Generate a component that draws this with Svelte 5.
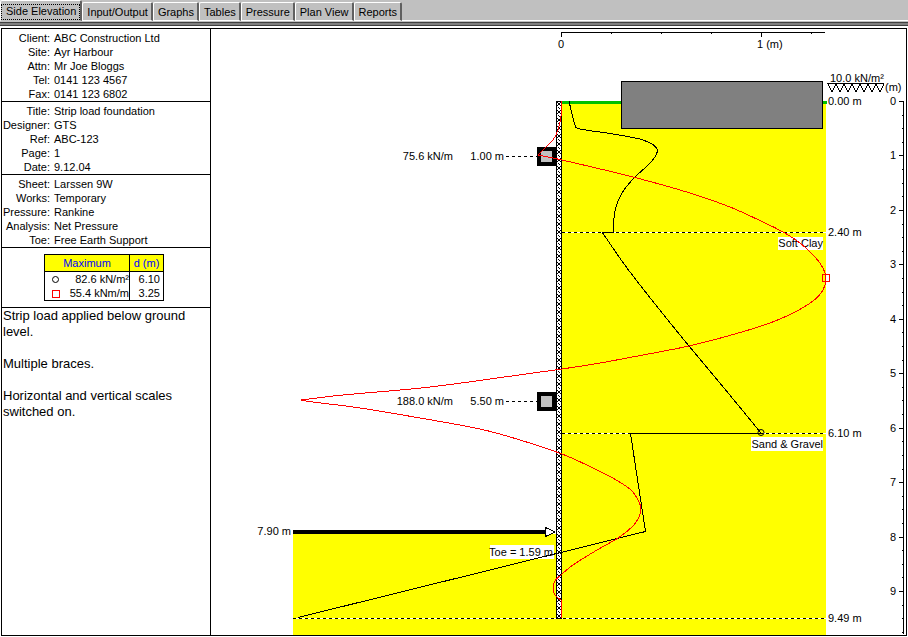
<script>
  let tabs = ["Side Elevation", "Input/Output", "Graphs", "Tables", "Pressure", "Plan View", "Reports"];
  let active = 0;

  const details = [
    [
      ["Client:", "ABC Construction Ltd"],
      ["Site:", "Ayr Harbour"],
      ["Attn:", "Mr Joe Bloggs"],
      ["Tel:", "0141 123 4567"],
      ["Fax:", "0141 123 6802"]
    ],
    [
      ["Title:", "Strip load foundation"],
      ["Designer:", "GTS"],
      ["Ref:", "ABC-123"],
      ["Page:", "1"],
      ["Date:", "9.12.04"]
    ],
    [
      ["Sheet:", "Larssen 9W"],
      ["Works:", "Temporary"],
      ["Pressure:", "Rankine"],
      ["Analysis:", "Net Pressure"],
      ["Toe:", "Free Earth Support"]
    ]
  ];

  // drawing scales: y for a depth in metres, x for a distance from the wall
  const depthY = d => Math.round(101 + d * 54.45);
  const distX = d => 561 + d * 200;

  const depthTicks = Array.from({ length: 40 }, (_, i) => i / 4).filter(d => depthY(d) < 634);
  const distTicks = [0, 0.25, 0.5, 0.75, 1, 1.25];

  const layers = [
    { x1: 562, y: 232, label: "2.40 m" },
    { x1: 562, y: 433, label: "6.10 m" },
    { x1: 293, y: 618, label: "9.49 m" }
  ];

  const braces = [
    { y: 156, force: "75.6 kN/m", depth: "1.00 m" },
    { y: 401, force: "188.0 kN/m", depth: "5.50 m" }
  ];

  // net pressure
  const pressureTop = [
    [569, 101], [572, 114], [575, 125], [580, 129], [613, 134], [643, 140], [657, 149],
    [652, 161], [634, 178], [622, 193], [616, 207], [614, 218], [613, 232]
  ];
  const pressureMid = [[602, 232], [627, 268], [659, 309], [689, 346], [724, 388], [761, 433]];
  const pressureLow = "M761 433.5 H630.5 L645.5 531.5 L298 617.5";

  // bending moment, split where it turns sharply at the braces
  const moments = [
    [[561, 101], [561, 116], [558, 130], [553, 140], [545, 148], [538, 155]],
    [
      [538, 155], [562, 160], [633, 177], [690, 193], [730, 207], [763, 222], [783, 232], [800, 243],
      [815, 257], [823, 268], [826, 278], [823, 290], [813, 301], [793, 313], [770, 323], [735, 334],
      [689, 346], [643, 355], [600, 363], [562, 369], [533, 373], [430, 387], [343, 395], [301, 400]
    ],
    [
      [301, 400], [313, 402], [360, 408], [420, 418], [480, 429], [520, 440], [562, 454], [593, 468],
      [618, 481], [632, 491], [639, 502], [641, 509], [639, 517], [633, 526], [618, 538], [597, 550],
      [573, 565], [562, 574], [555, 581], [553, 588], [555, 595], [561, 600]
    ],
    [[561, 600], [561, 618]]
  ];

  function smooth(points) {
    let d = `M${points[0][0]} ${points[0][1]}`;
    for (let i = 0; i < points.length - 1; i++) {
      const a = points[i - 1] || points[i];
      const b = points[i];
      const c = points[i + 1];
      const e = points[i + 2] || c;
      d += ` C${b[0] + (c[0] - a[0]) / 6} ${b[1] + (c[1] - a[1]) / 6}`;
      d += ` ${c[0] - (e[0] - b[0]) / 6} ${c[1] - (e[1] - b[1]) / 6} ${c[0]} ${c[1]}`;
    }
    return d;
  }
</script>

<div class="app">
  <div class="tabs" role="tablist">
    {#each tabs as tab, i}
      <button role="tab" aria-selected={active === i} class:active={active === i} on:click={() => (active = i)}>
        <span>{tab}</span>
      </button>
    {/each}
  </div>

  <main>
    <aside>
      {#each details as group}
        <dl>
          {#each group as [name, value]}
            <dt>{name}</dt>
            <dd>{value}</dd>
          {/each}
        </dl>
      {/each}

      <div class="maximum">
        <table>
          <colgroup>
            <col class="col-symbol" />
            <col />
            <col class="col-depth" />
          </colgroup>
          <thead>
            <tr><th colspan="2">Maximum</th><th>d (m)</th></tr>
          </thead>
          <tbody>
            <tr>
              <td>
                <svg width="9" height="9" viewBox="0 0 9 9"><circle cx="4.5" cy="4.5" r="3" fill="none" stroke="#000" /></svg>
              </td>
              <td class="value">82.6 kN/m²</td>
              <td class="depth">6.10</td>
            </tr>
            <tr>
              <td>
                <svg width="9" height="9" viewBox="0 0 9 9"><rect x="1.5" y="1.5" width="7" height="7" fill="none" stroke="#f00" /></svg>
              </td>
              <td class="value">55.4 kNm/m</td>
              <td class="depth">3.25</td>
            </tr>
          </tbody>
        </table>
      </div>

      <div class="notes">
        <p>Strip load applied below ground level.</p>
        <p>Multiple braces.</p>
        <p>Horizontal and vertical scales switched on.</p>
      </div>
    </aside>

    <svg class="elevation" viewBox="211 29 695 606" role="img" aria-label="Side Elevation">
      <defs>
        <pattern id="hatch" x="557" y="102" width="4" height="8" patternUnits="userSpaceOnUse">
          <rect width="4" height="8" fill="#fff" />
          <path d="M0 0h1v1h-1z M3 0h1v1h-1z M1 1h2v2h-2z M0 3h1v1h-1z M3 3h1v1h-1z M1 5h1v1h-1z M2 6h1v1h-1z" fill="#000" />
        </pattern>
      </defs>

      <!-- soil -->
      <rect x="562" y="104" width="264" height="531" fill="#ff0" />
      <rect x="293" y="534" width="269" height="101" fill="#ff0" />
      <rect x="562" y="101" width="265" height="3" fill="#00c000" />

      {#each layers as layer}
        <path d="M{layer.x1} {layer.y + 0.5}H826" stroke="#fff" />
        <path d="M{layer.x1} {layer.y + 0.5}H826" stroke="#000" stroke-dasharray="3 3" />
        <text x="828" y={layer.y + 4}>{layer.label}</text>
      {/each}

      <rect x="778" y="237" width="45" height="13" fill="#fff" />
      <text x="823" y="247" text-anchor="end">Soft Clay</text>
      <rect x="751" y="437" width="72" height="14" fill="#fff" />
      <text x="823" y="448" text-anchor="end">Sand &amp; Gravel</text>
      <rect x="490" y="545" width="64" height="14" fill="#fff" />
      <text x="553" y="556" text-anchor="end">Toe = 1.59 m</text>

      <!-- strip load and surcharge -->
      <rect x="621.5" y="81.5" width="201" height="47" fill="#808080" stroke="#000" />
      <path d="M827 83.5H884" stroke="#000" />
      {#each [0, 1, 2, 3, 4, 5, 6] as i}
        <path d="M{828 + i * 8} 84l4 8l4 -8" class="line" />
      {/each}
      <text x="830" y="82">10.0 kN/m²</text>
      <text x="885" y="91">(m)</text>
      <text x="828" y="105">0.00 m</text>

      <!-- excavation level -->
      <rect x="293" y="530" width="253" height="4" />
      <text x="291" y="535" text-anchor="end">7.90 m</text>

      <!-- sheet pile -->
      <rect x="556" y="101" width="6" height="518" />
      <rect x="557" y="102" width="4" height="516" fill="url(#hatch)" />
      <path d="M545.5 527.5L555 532L545.5 536.5Z" fill="#fff" stroke="#000" />

      {#each braces as brace}
        <text x="453" y={brace.y + 4} text-anchor="end">{brace.force}</text>
        <text x="504" y={brace.y + 4} text-anchor="end">{brace.depth}</text>
        <path d="M506 {brace.y + 0.5}H537" stroke="#000" stroke-dasharray="3 3" />
        <rect x="537" y={brace.y - 9} width="19" height="19" />
        <rect x="541" y={brace.y - 5} width="11" height="11" fill="#c0c0c0" />
      {/each}

      <path d={smooth(pressureTop)} class="line" />
      <path d="M602 232.5H614" class="line" />
      <path d={smooth(pressureMid)} class="line" />
      <path d={pressureLow} class="line" />
      <circle cx="761" cy="432.5" r="3" class="line round" />

      {#each moments as part}
        <path d={smooth(part)} class="line moment" />
      {/each}
      <rect x="822.5" y="274.5" width="7" height="7" class="line moment" />

      <!-- horizontal scale -->
      <path d="M561 32.5H825" stroke="#000" />
      {#each distTicks as d}
        <rect x={distX(d)} y="33" width="1" height={d % 1 ? 1 : 4} />
      {/each}
      <text x="561" y="48" text-anchor="middle">0</text>
      <text x="757" y="48">1 (m)</text>

      <!-- vertical scale -->
      <rect x="903" y="101" width="1" height="533" />
      {#each depthTicks as d}
        <rect x={d % 1 ? 902 : 899} y={depthY(d)} width={d % 1 ? 1 : 4} height="1" />
        {#if d % 1 === 0}
          <text x="896" y={depthY(d) + 4} text-anchor="end">{d}</text>
        {/if}
      {/each}
    </svg>
  </main>
</div>

<style>
  :global(body) {
    background: #fff;
  }

  .app {
    display: flex;
    flex-direction: column;
    min-height: 100vh;
    box-sizing: border-box;
    padding-bottom: 1px;
    font-family: "Liberation Sans", Arial, sans-serif;
    font-size: 11px;
    line-height: 14px;
    color: #000;
  }

  .tabs {
    display: flex;
    align-items: flex-end;
    height: 26px;
    box-sizing: border-box;
    padding-bottom: 5px;
    background: linear-gradient(#c0c0c0 20px, #fff 20px, #fff 21px, #c0c0c0 21px, #c0c0c0 22px, #404040 22px, #404040 23px, #808080 23px, #808080 25px, #404040 25px);
  }

  .tabs button {
    height: 19px;
    padding: 0 3px 0 4px;
    border: 1px solid #fff;
    border-right: 2px solid #606060;
    border-bottom-color: #fff;
    border-radius: 2px 2px 0 0;
    background: #c0c0c0;
    color: #000;
    font: inherit;
    line-height: 16px;
  }

  .tabs button.active {
    height: 21px;
    padding: 2px 0 0;
    border-bottom-color: #c0c0c0;
  }

  .tabs button span {
    display: block;
  }

  .tabs button.active span {
    height: 16px;
    box-sizing: border-box;
    padding: 0 3px 0 4px;
    border: 1px dotted #000;
    line-height: 12px;
  }

  main {
    flex: 1;
    display: flex;
    align-items: flex-start;
    margin: 2px 1px 0;
    border: 1px solid #000;
  }

  aside {
    flex: none;
    align-self: stretch;
    width: 208px;
    border-right: 1px solid #000;
  }

  dl {
    display: grid;
    grid-template-columns: 48px 1fr;
    column-gap: 4px;
    margin: 0;
    padding: 2px 0 0;
    border-bottom: 1px solid #000;
  }

  dt {
    text-align: right;
    white-space: nowrap;
  }

  dd {
    margin: 0;
  }

  .maximum {
    padding: 6px 0 6px 42px;
    border-bottom: 1px solid #000;
  }

  table {
    width: 120px;
    border: 1px solid #000;
    border-collapse: separate;
    border-spacing: 0;
    table-layout: fixed;
  }

  .col-symbol {
    width: 20px;
  }

  .col-depth {
    width: 34px;
  }

  th, td {
    height: 14px;
    padding: 0;
    font-weight: normal;
    white-space: nowrap;
  }

  th {
    height: 16px;
    border-bottom: 1px solid #000;
    background: #ff0;
    color: #00f;
  }

  th:last-child, .depth {
    border-left: 1px solid #000;
  }

  td svg {
    display: block;
    margin: auto;
  }

  .value {
    text-align: right;
  }

  .depth {
    padding-right: 3px;
    text-align: right;
  }

  .notes {
    padding: 0 1px;
    font-size: 13px;
    line-height: 16px;
  }

  .notes p {
    margin: 0 0 16px;
  }

  .elevation {
    flex: 1;
    min-width: 0;
    display: block;
    shape-rendering: crispEdges;
  }

  .elevation text {
    font-size: 11px;
  }

  .line {
    fill: none;
    stroke: #000;
  }

  .round {
    shape-rendering: auto;
  }

  .moment {
    stroke: #f00;
  }
</style>
